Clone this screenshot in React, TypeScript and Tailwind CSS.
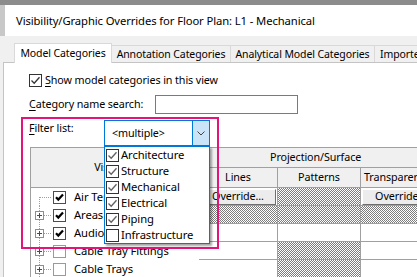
import React from "react";

const hatch =
  "bg-[image:repeating-conic-gradient(#7d7d7d_0_25%,#ffffff_0_50%)] bg-[length:2px_2px]";

const Box = ({ checked, mark = "#333333" }: { checked: boolean; mark?: string }) => (
  <div className="w-[13px] h-[13px] border border-[#333333] bg-white shrink-0 flex items-center justify-center">
    {checked && (
      <svg width="11" height="11" viewBox="0 0 11 11">
        <path d="M1.5 5.5 L4.2 8.2 L9.5 2.2" fill="none" stroke={mark} strokeWidth="1.3" />
      </svg>
    )}
  </div>
);

const GridBox = ({ checked }: { checked: boolean }) => (
  <div
    className={`w-[13px] h-[13px] border bg-white shrink-0 flex items-center justify-center ${
      checked ? "border-[#4d4d4d]" : "border-[#9a9a9a]"
    }`}
  >
    {checked && (
      <svg width="11" height="11" viewBox="0 0 11 11">
        <path d="M2 5.2 L4.3 7.6 L9 2.4" fill="none" stroke="#000" strokeWidth="2.2" />
      </svg>
    )}
  </div>
);

const Tree = ({ first, plus }: { first?: boolean; plus?: boolean }) => (
  <svg width="22" height="18" className="shrink-0" shapeRendering="crispEdges">
    <line x1="8.5" y1={first ? 9 : 0} x2="8.5" y2="18" stroke="#a0a0a0" strokeDasharray="1 1" />
    <line x1="9" y1="9.5" x2="21" y2="9.5" stroke="#a0a0a0" strokeDasharray="1 1" />
    {plus && (
      <>
        <rect x="4.5" y="5.5" width="8" height="8" fill="#fff" stroke="#8e8e8e" />
        <line x1="6" y1="9.5" x2="11" y2="9.5" stroke="#2d4f86" />
        <line x1="8.5" y1="7" x2="8.5" y2="12" stroke="#2d4f86" />
      </>
    )}
  </svg>
);

const rows = [
  { name: "Air Terminals", on: true, first: true, lines: "btn", pat: true, tr: "btn" },
  { name: "Areas", on: true, plus: true, lines: "hatch", pat: true, tr: "hatch" },
  { name: "Audio Visual Devices", on: true, plus: true, lines: "", pat: false, tr: "" },
  { name: "Cable Tray Fittings", on: false, plus: true, lines: "", pat: true, tr: "" },
  { name: "Cable Trays", on: false, plus: true, lines: "", pat: true, tr: "" },
];

const Cell = ({ kind }: { kind: string }) => (
  <div
    className={`h-[18px] border-b border-r border-[#a0a0a0] flex items-center px-px ${
      kind === "hatch" ? hatch : "bg-white"
    }`}
  >
    {kind === "btn" && (
      <div className="w-full h-[16px] bg-[#ececec] border border-white border-r-[#6e6e6e] border-b-[#6e6e6e] flex items-center justify-center">
        Override...
      </div>
    )}
  </div>
);

const Underline = ({ c }: { c: string }) => <span className="underline underline-offset-2">{c}</span>;

export default function App() {
  const filters = [
    ["Architecture", true],
    ["Structure", true],
    ["Mechanical", true],
    ["Electrical", true],
    ["Piping", true],
    ["Infrastructure", false],
  ] as const;

  return (
    <div className="relative w-[417px] h-[277px] overflow-hidden bg-[#f0f0f0] text-black text-[10.75px] tracking-[-0.1px] leading-none font-['Segoe_UI','Noto_Sans',sans-serif]">
      <div className="h-[5px] bg-[#8c8c8c]" />
      <div className="flex h-[31px]">
        <div className="w-[5px] bg-[#c8c8c8]" />
        <div className="flex-1 bg-white pl-[11px] flex items-center text-[11.25px]">
          Visibility/Graphic Overrides for Floor Plan: L1 - Mechanical
        </div>
      </div>

      <div className="flex items-end h-[26px] pl-[14px] whitespace-nowrap text-[10.5px]">
        <div className="relative z-10 -mb-px shrink-0 h-[20px] w-[98px] bg-white border border-b-0 border-[#d9d9d9] flex items-center justify-center">
          Model Categories
        </div>
        <div className="shrink-0 h-[17px] w-[119px] border-t border-r border-[#d9d9d9] flex items-center justify-center">
          Annotation Categories
        </div>
        <div className="shrink-0 h-[17px] w-[144px] border-t border-r border-[#d9d9d9] flex items-center justify-center">
          Analytical Model Categories
        </div>
        <div className="shrink-0 h-[17px] w-[130px] border-t border-r border-[#d9d9d9] flex items-center pl-[5px]">
          Imported Categories
        </div>
      </div>

      <div className="ml-[3px] h-[220px] bg-white border-l border-t border-[#c4c4c4] pl-[25px] whitespace-nowrap">
        <div className="mt-[11px] flex items-center h-[13px] gap-[3px]">
          <Box checked />
          <span>
            <Underline c="S" />how model categories in this view
          </span>
        </div>

        <div className="mt-[8px] flex items-center h-[19px]">
          <span className="w-[126px]">
            <Underline c="C" />ategory name search:
          </span>
          <div className="w-[143px] h-[19px] border border-[#7a7a7a] bg-white" />
        </div>

        <div className="mt-[6px] flex items-start h-[26px]">
          <span className="w-[75px] pt-[3px]">
            <Underline c="F" />ilter list:
          </span>
          <div className="w-[106px] h-[26px] border border-[#0078d7] flex">
            <span className="flex-1 flex items-center pl-[7px]">&lt;multiple&gt;</span>
            <span className="w-[17px] bg-[#cce4f7] border-l border-[#0078d7] flex items-center justify-center">
              <svg width="8" height="5" viewBox="0 0 8 5">
                <path d="M0.5 0.5 L4 4 L7.5 0.5" fill="none" stroke="#444" />
              </svg>
            </span>
          </div>
        </div>

        <div className="mt-px ml-px w-[480px] border-l border-t border-[#a0a0a0] grid grid-cols-[168px_79px_83px_81px_69px]">
          <div className="row-span-2 bg-[#f0f0f0] border-r border-b border-[#a0a0a0] flex items-center justify-center">
            Visibility
          </div>
          <div className="col-span-4 h-[20px] bg-[#f0f0f0] border-r border-b border-[#a0a0a0] flex items-center pl-[71px]">
            Projection/Surface
          </div>
          <div className="h-[20px] bg-[#f0f0f0] border-r border-b border-[#a0a0a0] flex items-center justify-center">
            Lines
          </div>
          <div className="h-[20px] bg-[#f0f0f0] border-r border-b border-[#a0a0a0] flex items-center justify-center">
            Patterns
          </div>
          <div className="h-[20px] bg-[#f0f0f0] border-r border-b border-[#a0a0a0] flex items-center pl-[3px]">
            Transparency
          </div>
          <div className="h-[20px] bg-[#f0f0f0] border-b border-[#a0a0a0]" />

          {rows.map((r) => (
            <React.Fragment key={r.name}>
              <div className="h-[18px] flex items-center bg-white">
                <Tree first={r.first} plus={r.plus} />
                <GridBox checked={r.on} />
                <span className="ml-[8px] text-[11.25px]">{r.name}</span>
              </div>
              <Cell kind={r.lines} />
              <Cell kind={r.pat ? "hatch" : ""} />
              <Cell kind={r.tr} />
              <div className="h-[18px] border-b border-[#a0a0a0] bg-white" />
            </React.Fragment>
          ))}
        </div>
      </div>

      <div className="absolute left-[104px] top-[146px] w-[106px] h-[98px] bg-white border border-[#0078d7] shadow-[2px_2px_2px_rgba(0,0,0,0.35)] flex flex-col">
        {filters.map(([name, on]) => (
          <div key={name} className="h-[16px] flex items-center pl-px gap-[2px]">
            <Box checked={on} mark="#606060" />
            <span className="text-[11.25px]">{name}</span>
          </div>
        ))}
      </div>

      <div className="absolute left-[21px] top-[117px] w-[198px] h-[132px] border-2 border-[#e3157d]" />
    </div>
  );
}
